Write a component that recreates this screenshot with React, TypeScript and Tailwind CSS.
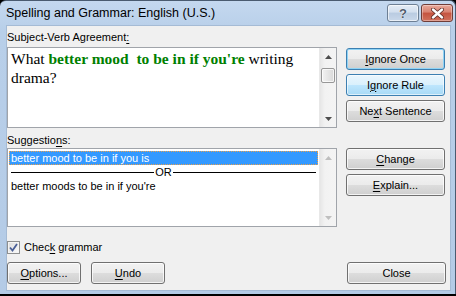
import React from "react";

const sans = { fontFamily: '"Liberation Sans", Arial, sans-serif' };
const serif = { fontFamily: '"Liberation Serif", "Times New Roman", serif' };

const U = ({ children }: { children: React.ReactNode }) => (
  <span className="underline decoration-1 underline-offset-[2px]">{children}</span>
);

type Variant = "normal" | "focus" | "hover";

const Btn = ({
  children,
  variant = "normal",
  className = "",
}: {
  children: React.ReactNode;
  variant?: Variant;
  className?: string;
}) => {
  const look = {
    normal:
      "border-[#707070] bg-[linear-gradient(#f2f2f2_0%,#ebebeb_50%,#dddddd_50%,#cfcfcf_100%)] shadow-[inset_0_0_0_1px_rgba(255,255,255,0.75)]",
    focus:
      "border-[#3c7fb1] bg-[linear-gradient(#f2f2f2_0%,#ebebeb_50%,#dddddd_50%,#cfcfcf_100%)] shadow-[inset_0_0_0_1px_#8fd3f5]",
    hover:
      "border-[#3c7fb1] bg-[linear-gradient(#eaf6fd_0%,#d9f0fc_50%,#bee6fd_50%,#a7d9f5_100%)] shadow-[inset_0_0_0_1px_rgba(255,255,255,0.6)]",
  }[variant];
  return (
    <div
      className={`flex h-[22px] items-center justify-center rounded-[3px] border text-[11px] leading-none text-black ${look} ${className}`}
    >
      {children}
    </div>
  );
};

const Arrow = ({ up, color }: { up?: boolean; color: string }) => (
  <svg width="7" height="4" viewBox="0 0 7 4">
    <path d={up ? "M0 4 L3.5 0 L7 4 Z" : "M0 0 L7 0 L3.5 4 Z"} fill={color} />
  </svg>
);

const ScrollBar = ({ enabled }: { enabled: boolean }) => {
  const c = enabled ? "#4d4d4d" : "#bfbfbf";
  return (
    <div className="flex w-[17px] flex-col border-l border-[#e8e8e8] bg-[linear-gradient(90deg,#e6e6e6,#f2f2f2_30%,#f4f4f4)]">
      <div className="flex h-[17px] items-center justify-center">
        <Arrow up color={c} />
      </div>
      <div className="flex-1">
        {enabled && (
          <div className="mx-[1px] mt-[3px] h-[15px] rounded-[2px] border border-[#979797] bg-[linear-gradient(90deg,#f3f3f3,#e6e6e6_50%,#d9d9d9)] shadow-[inset_0_0_0_1px_rgba(255,255,255,0.7)]" />
        )}
      </div>
      <div className="flex h-[17px] items-center justify-center">
        <Arrow color={c} />
      </div>
    </div>
  );
};

const TitleButtons = () => (
  <div className="mt-[3px] flex gap-[2px] self-start">
    <div className="flex h-[18px] w-[32px] items-center justify-center rounded-[3px] border border-[#6d7f94] bg-[linear-gradient(#e4ecf6_0%,#d2dfee_45%,#b9cbe1_50%,#c9d8ea_100%)] shadow-[inset_0_0_0_1px_rgba(255,255,255,0.6)]">
      <span
        className="text-[13px] font-bold leading-none text-[#4f5b6b] [text-shadow:0_0_1px_#fff,0_0_1px_#fff]"
        style={sans}
      >
        ?
      </span>
    </div>
    <div className="flex h-[18px] w-[32px] items-center justify-center rounded-[3px] border border-[#6f3d38] bg-[linear-gradient(#e9a99b_0%,#d88170_45%,#c4533f_50%,#d0715d_100%)] shadow-[inset_0_0_0_1px_rgba(255,255,255,0.35)]">
      <svg width="13" height="11" viewBox="0 0 13 11">
        <path d="M2 1.5 L11 9.5 M11 1.5 L2 9.5" stroke="#5a2a24" strokeWidth="4" strokeLinecap="round" />
        <path d="M2 1.5 L11 9.5 M11 1.5 L2 9.5" stroke="#ffffff" strokeWidth="2.4" strokeLinecap="round" />
      </svg>
    </div>
  </div>
);

export default function App() {
  return (
    <div className="flex h-[296px] w-[456px] flex-col bg-black" style={sans}>
      <div className="flex h-[294px] flex-col rounded-t-[6px] border-t border-r border-[#4a5b70] bg-[linear-gradient(#c4d8ef,#b8cfe9_30px,#b4cbe6)]">
        <div className="flex h-[24px] shrink-0 pl-[6px] pr-[2px]">
          <div className="self-center pt-[1px] text-[12.5px] text-black">
            Spelling and Grammar: English (U.S.)
          </div>
          <div className="ml-auto">
            <TitleButtons />
          </div>
        </div>

        <div className="ml-[6px] mr-[4px] flex h-[266px] flex-col border border-[#a5bbd5] bg-[#f0f0f0] pr-[4px] pt-[4px] text-[11px] text-black">
          {/* checking area */}
          <div className="flex gap-[9px]">
            <div className="flex w-[330px] flex-col">
              <div className="h-[15px] leading-[15px]">
                Subject-Verb Agreement<U>:</U>
              </div>
              <div className="mt-[2px] flex h-[81px] border border-[#a0a4aa] bg-white">
                <div className="flex-1 pl-[3px] pt-[1px] text-[15.5px] leading-[19px]" style={serif}>
                  What{" "}
                  <span className="font-bold text-[#008000]">
                    better mood{"\u00a0"} to be in if you're
                  </span>{" "}
                  writing drama?
                </div>
                <ScrollBar enabled />
              </div>
            </div>
            <div className="flex w-[99px] flex-col gap-[4px] pt-[18px]">
              <Btn variant="focus">
                <U>I</U>gnore Once
              </Btn>
              <Btn variant="hover">
                I<U>g</U>nore Rule
              </Btn>
              <Btn>
                Ne<U>x</U>t Sentence
              </Btn>
            </div>
          </div>

          {/* suggestions */}
          <div className="flex gap-[9px]">
            <div className="flex w-[330px] flex-col">
              <div className="mt-[5px] h-[15px] leading-[15px]">
                Suggestio<U>n</U>s:
              </div>
              <div className="flex h-[79px] border border-[#a0a4aa] bg-white">
                <div className="flex flex-1 flex-col pt-[2px]">
                  <div className="mx-[1px] flex h-[14px] items-center border border-dotted border-[#e8a04c] bg-[#3399ff] pl-[1px] text-white">
                    better mood to be in if you is
                  </div>
                  <div className="flex h-[14px] items-center px-[3px]">
                    <div className="h-px flex-1 bg-black" />
                    <span className="px-[1px]">OR</span>
                    <div className="h-px flex-1 bg-black" />
                  </div>
                  <div className="flex h-[14px] items-center pl-[3px]">
                    better moods to be in if you're
                  </div>
                </div>
                <ScrollBar enabled={false} />
              </div>
            </div>
            <div className="flex w-[99px] flex-col gap-[4px] pt-[20px]">
              <Btn>
                <U>C</U>hange
              </Btn>
              <Btn>
                <U>E</U>xplain...
              </Btn>
            </div>
          </div>

          {/* options */}
          <div className="mt-[13px] flex h-[15px] items-center gap-[4px]">
            <div className="flex h-[13px] w-[13px] items-center justify-center border border-[#8e8f8f] bg-[linear-gradient(135deg,#dcdcdc,#fbfbfb)] shadow-[inset_0_0_0_1px_#f4f4f4]">
              <svg width="9" height="9" viewBox="0 0 9 9">
                <path d="M1 4.5 L3.5 7.5 L8 1" fill="none" stroke="#4a5f97" strokeWidth="1.8" />
              </svg>
            </div>
            <span>
              Chec<U>k</U> grammar
            </span>
          </div>

          <div className="mt-[7px] flex gap-[10px]">
            <Btn className="w-[74px]">
              <U>O</U>ptions...
            </Btn>
            <Btn className="w-[74px]">
              <U>U</U>ndo
            </Btn>
            <Btn className="ml-auto w-[99px]">Close</Btn>
          </div>
        </div>
      </div>
    </div>
  );
}
